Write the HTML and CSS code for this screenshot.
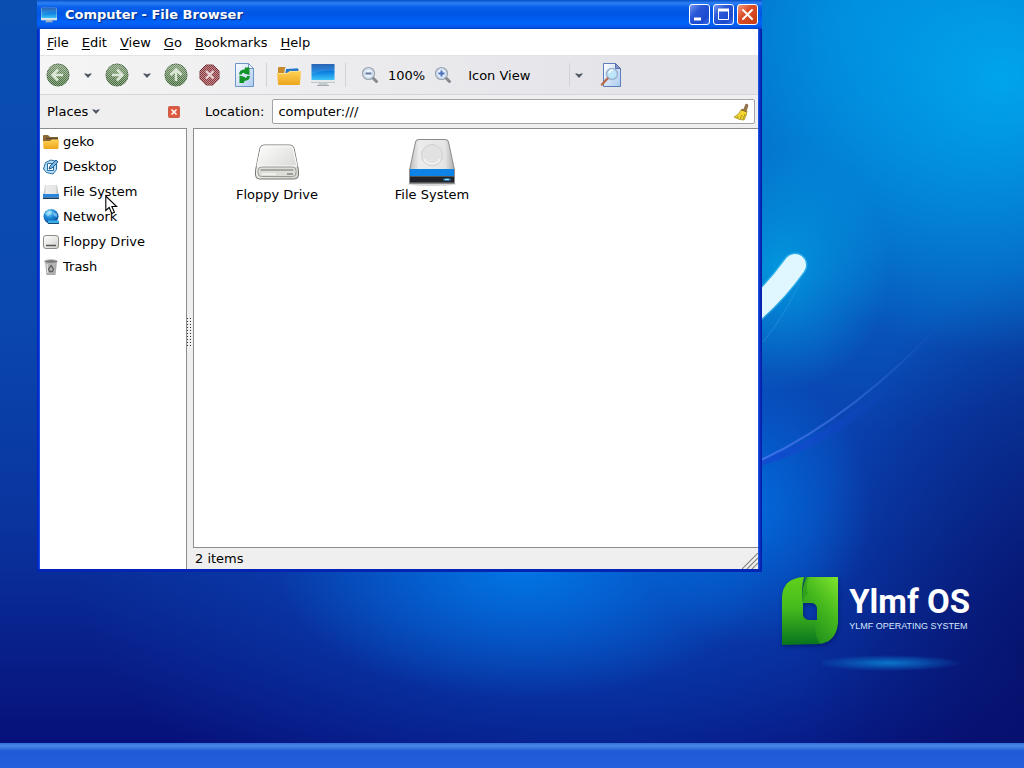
FILE: index.html
```html
<!DOCTYPE html>
<html lang="en">
<head>
<meta charset="utf-8">
<title>Computer - File Browser</title>
<link rel="stylesheet" href="styles.css">
</head>
<body>
<svg class="defs" width="0" height="0" aria-hidden="true">
  <defs>
    <linearGradient id="green" x1="0" y1="0" x2="0" y2="1"><stop offset="0" stop-color="#7d9a70"/><stop offset="1" stop-color="#3a6630"/></linearGradient>
    <linearGradient id="screen" x1="0" y1="0" x2="0" y2="1"><stop offset="0" stop-color="#0b4da8"/><stop offset=".45" stop-color="#0879dc"/><stop offset="1" stop-color="#3fc4fa"/></linearGradient>
    <linearGradient id="folder" x1="0" y1="0" x2="0" y2="1"><stop offset="0" stop-color="#ffd257"/><stop offset="1" stop-color="#eda51d"/></linearGradient>
    <linearGradient id="metal" x1="0" y1="0" x2="1" y2="1"><stop offset="0" stop-color="#ffffff"/><stop offset="1" stop-color="#d0d0cc"/></linearGradient>
    <linearGradient id="disk" x1="0" y1="0" x2="1" y2="0"><stop offset="0" stop-color="#bdbdbd"/><stop offset=".2" stop-color="#ececec"/><stop offset=".8" stop-color="#e4e4e4"/><stop offset="1" stop-color="#b0b0b0"/></linearGradient>
    <linearGradient id="page" x1="0" y1="0" x2="1" y2="1"><stop offset="0" stop-color="#ffffff"/><stop offset="1" stop-color="#a9caf0"/></linearGradient>
    <radialGradient id="globe" cx=".4" cy=".25" r=".8"><stop offset="0" stop-color="#8edcf8"/><stop offset=".45" stop-color="#1c88d6"/><stop offset="1" stop-color="#0a4390"/></radialGradient>
    <pattern id="stipple" width="2" height="2" patternUnits="userSpaceOnUse"><path d="M0 0h1v1H0zM1 1h1v1H1z" fill="#eeeeee" fill-opacity=".5"/></pattern>
    <symbol id="i-computer" viewBox="0 0 24 24">
      <rect x="0" y="1" width="24" height="19" rx="1" fill="#e9eef2"/><rect x=".5" y="1" width="23" height="16" fill="url(#screen)"/><path d="M.5 1h23v7Q12 7 .5 11z" fill="#fff" opacity=".13"/><path d="M0 17h24v2.500H0z" fill="#e4e8ea"/><path d="M0 19.500h24" stroke="#aab2b8" stroke-width=".6"/><path d="M8 20h8l1 2H7z" fill="#c5cacd"/><path d="M6 22.500h12" stroke="#a5abb0"/>
    </symbol>
    <symbol id="i-folder" viewBox="0 0 24 24">
      <path d="M1 5q0-1 1-1h6l2 2h11q1 0 1 1v14H1z" fill="#c98a2c"/><path d="M8 5l13-1 1 8H7z" fill="#e8f3fc"/><path d="M9 6l12-.800.5 7L8 13z" fill="#2d78c4"/><path d="M0 10h10l3-2h11l-1 12.500q0 1.500-1 1.500H2q-1 0-1-1.500z" fill="url(#folder)"/><path d="M1 10.500h9l3-2h10" stroke="#ffe694" fill="none" stroke-width=".8"/>
    </symbol>
    <symbol id="i-arrow" viewBox="0 0 8 5"><path d="M0 .5h8L4 5z" fill="#4c5560"/><path d="M2 0l2 1.500L6 0z" fill="#f2f2f2"/></symbol>
    <symbol id="i-lens" viewBox="0 0 20 20">
      <circle cx="8.500" cy="8.500" r="6" fill="#dbe7f6" stroke="#9aa1ad" stroke-width="1.200"/><circle cx="8.500" cy="8.500" r="4.500" fill="#e9f2fd" stroke="#c3d6ed"/><path d="M13.500 13.500l3 3" stroke="#85898f" stroke-width="3" stroke-linecap="round"/>
    </symbol>
    <symbol id="i-disk" viewBox="0 0 48 48">
      <ellipse cx="24" cy="46" rx="24" ry="2" fill="#999" opacity=".4"/><path d="M7 4q1-3 4-3h26q3 0 4 3l6 28v13q0 1-1 1H2q-1 0-1-1V32z" fill="#8b8b8b"/><path d="M8 4q.5-2 3-2h26q2.500 0 3 2l6 28H2z" fill="url(#disk)"/><circle cx="24" cy="17" r="10.500" fill="#e2e2e2" stroke="#d0d0d0"/><path d="M16 21a9 9 0 0 0 16 0" stroke="#f6f6f6" stroke-width="1.500" fill="none"/><path d="M2 31h44v7H2z" fill="#0d83e8"/><path d="M2 38h44v6.500H2z" fill="#20242a"/><path d="M2 38.500h44" stroke="#555"/><ellipse cx="39" cy="41.500" rx="4" ry="1.500" fill="#2c72a5"/><path d="M37 41.500h4" stroke="#bff" stroke-width=".8"/>
    </symbol>
  </defs>
</svg>

<main class="desktop">
  <svg class="swoosh" viewBox="0 0 1024 768" preserveAspectRatio="none" aria-hidden="true">
    <defs>
      <linearGradient id="trail" x1="760" y1="0" x2="940" y2="0" gradientUnits="userSpaceOnUse"><stop offset="0" stop-color="#3f72ec"/><stop offset=".5" stop-color="#2860d0"/><stop offset="1" stop-color="#2860d0" stop-opacity="0"/></linearGradient>
      <linearGradient id="under" x1="750" y1="0" x2="900" y2="0" gradientUnits="userSpaceOnUse"><stop offset="0" stop-color="#1546d0"/><stop offset="1" stop-color="#1546d0" stop-opacity="0"/></linearGradient>
    </defs>
    <path d="M745 466Q850 430 920 350Q860 442 745 470z" fill="url(#under)" opacity=".8"/>
    <path d="M750 465Q850 422 948 316" stroke="url(#trail)" stroke-width="2" fill="none"/>
    <path d="M763 342Q785 315 800 282" stroke="#3a9be0" fill="none" opacity=".5"/>
    <path d="M750 314Q775 293 795 265" stroke="#69dcff" stroke-width="25" stroke-linecap="round" fill="none" opacity=".4"/>
    <path d="M750 314Q775 293 795 265" stroke="#e0f7ff" stroke-width="22" stroke-linecap="round" fill="none"/>
  </svg>

  <section class="brand">
    <svg class="brand-mark" viewBox="0 0 56 68" aria-hidden="true">
      <defs><linearGradient id="leafA" x1="0" y1="0" x2="0" y2="1"><stop offset="0" stop-color="#62cf1b"/><stop offset=".45" stop-color="#45bc1c"/><stop offset="1" stop-color="#08731e"/></linearGradient><linearGradient id="leafB" x1="1" y1="0" x2=".4" y2="1"><stop offset="0" stop-color="#80e42c"/><stop offset=".5" stop-color="#45b81d"/><stop offset="1" stop-color="#1f8f1c"/></linearGradient></defs>
      <path d="M33 43h2V31q-1-5-6-5h-8Q19 10 25 0H56V46Q54 66 36 67H30z" fill="url(#leafB)"/>
      <path d="M22 0Q19 10 21 26V38Q22 43 28 43H34Q31 56 38 67L0 68V20Q1 1 22 0z" fill="url(#leafA)"/>
      <path d="M22 0q-3 10-1 26 1-8 5-9-3-9 1-17z" fill="#1f8f18" opacity=".45"/>
    </svg>
    <div class="brand-text"><strong class="brand-name">Ylmf OS</strong><span class="brand-sub">YLMF OPERATING SYSTEM</span></div>
    <div class="brand-glow"></div>
  </section>

  <section class="window" aria-label="Computer - File Browser">
    <header class="titlebar">
      <svg class="icon16" aria-hidden="true"><use href="#i-computer"/></svg>
      <h1 class="title">Computer - File Browser</h1>
      <button class="winbtn" aria-label="Minimize"><svg viewBox="0 0 19 19"><path d="M4 14h7" stroke="#fff" stroke-width="3"/></svg></button>
      <button class="winbtn" aria-label="Maximize"><svg viewBox="0 0 19 19"><path d="M4.500 5v9.500h10V5" stroke="#fff" fill="none"/><path d="M4 5h11" stroke="#fff" stroke-width="3"/></svg></button>
      <button class="winbtn winbtn-close" aria-label="Close"><svg viewBox="0 0 19 19"><path d="M5 5l9 9M14 5l-9 9" stroke="#fff" stroke-width="2" stroke-linecap="round"/></svg></button>
    </header>

    <nav class="menubar" aria-label="Menu">
      <button class="menu"><u>F</u>ile</button><button class="menu"><u>E</u>dit</button><button class="menu"><u>V</u>iew</button><button class="menu"><u>G</u>o</button><button class="menu"><u>B</u>ookmarks</button><button class="menu"><u>H</u>elp</button>
    </nav>

    <div class="toolbar">
      <div class="history">
        <button class="tool" aria-label="Back" disabled><svg viewBox="0 0 24 24"><circle cx="12" cy="12" r="11" fill="url(#green)" stroke="#3f6238"/><path d="M17 12H7M12 6.500L6.500 12l5.500 5.500" stroke="#d5e5cf" stroke-width="2.500" fill="none"/><circle cx="12" cy="12" r="11.500" fill="url(#stipple)"/></svg></button>
        <button class="drop" aria-label="Back history" disabled><svg class="caret"><use href="#i-arrow"/></svg></button>
        <button class="tool" aria-label="Forward" disabled><svg viewBox="0 0 24 24"><circle cx="12" cy="12" r="11" fill="url(#green)" stroke="#3f6238"/><path d="M7 12h10M12 6.500l5.500 5.500-5.500 5.500" stroke="#d5e5cf" stroke-width="2.500" fill="none"/><circle cx="12" cy="12" r="11.500" fill="url(#stipple)"/></svg></button>
        <button class="drop" aria-label="Forward history" disabled><svg class="caret"><use href="#i-arrow"/></svg></button>
        <button class="tool" aria-label="Up" disabled><svg viewBox="0 0 24 24"><circle cx="12" cy="12" r="11" fill="url(#green)" stroke="#3f6238"/><path d="M12 18V7M6.500 12L12 6.500l5.500 5.500" stroke="#d5e5cf" stroke-width="2.500" fill="none"/><circle cx="12" cy="12" r="11.500" fill="url(#stipple)"/></svg></button>
      </div>
      <button class="tool" aria-label="Stop" disabled><svg viewBox="0 0 24 24"><path d="M8 2h7l6 6v8l-6 6H8l-6-6V8z" fill="#8f363c" stroke="#6f2229" stroke-linejoin="round"/><path d="M8 8l7.500 7.500M15.500 8L8 15.500" stroke="#e8d0d0" stroke-width="2"/><path d="M8 1.500h7.500l6 6v9l-6 6H8l-6.500-6v-9z" fill="url(#stipple)"/></svg></button>
      <button class="tool" aria-label="Reload"><svg viewBox="0 0 24 24"><path d="M3.500.5h13l5 5v18h-18z" fill="url(#page)" stroke="#6e95c5"/><path d="M16.500.5v5h5z" fill="#fff" stroke="#6e95c5"/><path d="M8.500 11.500Q8.500 8 13 8H14M16.500 13Q16.500 16.500 12 16.500H11" stroke="#119327" stroke-width="2.800" fill="none"/><path d="M13 4.500h4.500V12L12 10.500zM12 20H7.500v-7.500L13 14z" fill="#119327"/></svg></button>
      <span class="sep"></span>
      <button class="tool" aria-label="Home folder"><svg><use href="#i-folder"/></svg></button>
      <button class="tool" aria-label="Computer"><svg><use href="#i-computer"/></svg></button>
      <span class="sep"></span>
      <div class="zoom">
        <button class="zoombtn" aria-label="Zoom out"><svg viewBox="0 0 20 20"><use href="#i-lens"/><path d="M5.500 8.500h6" stroke="#667b9c" stroke-width="2"/></svg></button>
        <span>100%</span>
        <button class="zoombtn" aria-label="Zoom in"><svg viewBox="0 0 20 20"><use href="#i-lens"/><path d="M5.500 8.500h6M8.500 5.500v6" stroke="#4c70b8" stroke-width="2"/></svg></button>
      </div>
      <label class="viewpick"><select aria-label="View mode"><option>Icon View</option><option>List View</option></select><svg class="caret viewcaret"><use href="#i-arrow"/></svg></label>
      <button class="tool" aria-label="Search"><svg viewBox="0 0 24 24"><path d="M3.500.5h12l5 5v18h-17z" fill="url(#page)" stroke="#5b7fba"/><path d="M15.500.5v5h5z" fill="#8295cf" stroke="#5b6fae"/><circle cx="12" cy="11" r="5.500" fill="#bfe5fa" stroke="#9bb3d2" stroke-width="1.500"/><path d="M9 10q1-3 4-3" stroke="#fff" stroke-width="1.500" fill="none"/><path d="M7.500 15.500L2 21.500" stroke="#b86c50" stroke-width="2.500" stroke-linecap="round"/></svg></button>
    </div>

    <div class="body">
      <aside class="side">
        <div class="side-head"><button class="places">Places <svg class="caret"><use href="#i-arrow"/></svg></button>
          <button class="side-close" aria-label="Close side pane"><svg viewBox="0 0 12 12"><rect x=".5" y=".5" width="11" height="11" rx="1" fill="#de583e" stroke="#c95f4c"/><path d="M3.500 3.500l5 5M8.500 3.500l-5 5" stroke="#fff" stroke-width="1.500"/></svg></button></div>
        <ul class="places-list">
          <li><svg class="icon16" viewBox="0 0 16 16"><path d="M0 2q0-1 1-1h4l2 2h8v5H0z" fill="#8d6a35"/><path d="M3 4.500h12" stroke="#5c4a30" stroke-width="1.500"/><path d="M0 7h7l2-1.500h7L15.500 14q0 1-1 1h-13q-1 0-1-1z" fill="url(#folder)"/></svg>geko</li>
          <li><svg class="icon16" viewBox="0 0 16 16"><path d="M2.500 3.500L8 1l5.500 1.500v8L10 15l-6.500-1.500L.5 10z" fill="#b9dcf3" stroke="#2470a8"/><path d="M4.500 4.500h6v7h-6z" fill="#fff" stroke="#2470a8"/><path d="M6 10l1-3 6-6 2 2-6 6z" fill="#7fb6de" stroke="#1c5e96"/></svg>Desktop</li>
          <li><svg class="icon16" viewBox="0 0 16 16"><path d="M2 1h12l1.500 9H.5z" fill="url(#disk)"/><path d="M0 10h16v3.500H0z" fill="#2886dd"/><path d="M0 13.500h16v1.500H0z" fill="#1b3a5c"/></svg>File System</li>
          <li><svg class="icon16" viewBox="0 0 16 16"><circle cx="8" cy="7.500" r="7.500" fill="url(#globe)"/><path d="M2 5q3-4 6-3l1 2-4 3zM10 3l4 2v3l-3-1z" fill="#baf0ff" opacity=".55"/><path d="M5 11.500h11v3H5z" fill="#37aeea"/><path d="M5 14.500h11" stroke="#1d4975"/></svg>Network</li>
          <li><svg class="icon16" viewBox="0 0 16 16"><rect x=".5" y="1.500" width="15" height="13" rx="2.500" fill="url(#metal)" stroke="#8c8c88"/><path d="M3 11.500h10" stroke="#565652" stroke-width="1.500"/></svg>Floppy Drive</li>
          <li><svg class="icon16" viewBox="0 0 16 16"><path d="M2.500 3h11l-1.500 13H4z" fill="#b4b4b4" stroke="#959595" stroke-width=".7"/><ellipse cx="8" cy="2.500" rx="6.500" ry="1.800" fill="#777" stroke="#bababa"/><path d="M8 6.500l2.500 3.500-1 2.500h-3L5.500 10z" fill="none" stroke="#606060" stroke-width="1.300"/><path d="M4 5l.8 9" stroke="#e9e9e9"/></svg>Trash</li>
        </ul>
      </aside>
      <div class="splitter"><svg class="grip" viewBox="0 0 6 30"><defs><pattern id="dots" width="3" height="3" patternUnits="userSpaceOnUse"><path d="M0 1h1v1H0z" fill="#333"/><path d="M1 2h1v1H1z" fill="#fff"/></pattern></defs><path d="M0 0h6v30H0z" fill="url(#dots)"/></svg></div>
      <section class="content">
        <div class="location"><label for="loc">Location:</label>
          <div class="field"><input id="loc" type="text" value="computer:///"><button class="clear" aria-label="Clear location"><svg viewBox="0 0 16 18"><path d="M11 6l2-5 2 1-1.500 5z" fill="#a37946" stroke="#6b4c2c" stroke-width=".7"/><path d="M8 7q3-2 6 1-.5 5-3 9-5 0-10-3 5-2 7-7z" fill="#f4d831" stroke="#a18a1e" stroke-width=".8"/><path d="M5 13l-1 2M9 12l-2 4M12 11l-2 5" stroke="#ad941c"/><path d="M8.500 6.500l5 2" stroke="#875f3b" stroke-width="1.500"/></svg></button></div>
        </div>
        <div class="files">
          <figure class="file"><svg viewBox="0 0 48 48"><path d="M7 10q.8-3 4-3h26q3.200 0 4 3l4 20q.500 2 .500 4v3q0 4-4 4H6.500q-4 0-4-4v-3q0-2 .500-4z" fill="url(#metal)" stroke="#777773"/><path d="M8 10q.5-2 3-2h26q2.500 0 3 2l4 18H4z" fill="none" stroke="#fff"/><rect x="5" y="29" width="38" height="9.500" rx="3.500" fill="#deded9" stroke="#999994"/><path d="M7.500 32h33" stroke="#95958f" stroke-width="1.500"/><path d="M9 36h14" stroke="#fff"/><path d="M34 36h6" stroke="#999" stroke-width="2"/></svg><figcaption>Floppy Drive</figcaption></figure>
          <figure class="file"><svg><use href="#i-disk"/></svg><figcaption>File System</figcaption></figure>
        </div>
        <footer class="status"><span>2 items</span><svg class="resize" viewBox="0 0 16 16" aria-hidden="true"><path d="M0 16L16 0M5 16L16 5M10 16l6-6" stroke="#87877f" stroke-width="1.200"/></svg></footer>
      </section>
    </div>
  </section>

  <svg class="cursor" viewBox="0 0 13 20" aria-hidden="true"><path d="M.8 1v14.500l3.400-3 2.600 6 2.600-1.200L6.900 11.500h4.700z" fill="#fff" stroke="#000" stroke-width="1.100"/></svg>
  <div class="taskbar"></div>
</main>
</body>
</html>
```
FILE: styles.css
```css
* { box-sizing: border-box; }
body { margin: 0; font: 13px/17px "DejaVu Sans", sans-serif; color: #000; }
.defs { position: absolute; }
button { margin: 0; padding: 0; border: 0; background: none; font: inherit; color: inherit; }
svg { display: block; }

.desktop {
  position: relative;
  display: flex;
  flex-direction: column;
  justify-content: flex-end;
  min-height: 100vh;
  overflow: hidden;
  background:
    radial-gradient(ellipse 11% 16% at 76% 35%, rgba(0, 170, 232, .75), transparent),
    radial-gradient(ellipse 30% 36% at 98% 10%, rgba(0, 168, 238, .95), transparent),
    radial-gradient(ellipse 24% 17% at 51% 74%, rgba(0, 126, 236, .85), transparent),
    radial-gradient(ellipse 12% 18% at 73% 66%, rgba(0, 116, 228, .8), transparent),
    radial-gradient(ellipse 26% 50% at 104% 84%, rgba(6, 16, 104, .9), transparent),
    radial-gradient(ellipse 50% 46% at 56% 68%, rgba(8, 78, 196, .85), transparent),
    radial-gradient(ellipse 40% 56% at 84% 0, #0080d6, transparent),
    linear-gradient(180deg, #0a4eb2 0, #0a48b0 40%, #0a349e 68%, #07107a 97%);
}
.swoosh { position: absolute; inset: 0; width: 100%; height: 100%; }
.taskbar {
  position: relative;
  height: 25px;
  background: linear-gradient(180deg, #3270d8 0, #4a88e8 3px, #1f5bd6 8px, #265fdc 100%);
}

.brand {
  position: absolute;
  right: 54px;
  bottom: 95px;
  display: grid;
  grid-template-columns: 56px auto;
  column-gap: 11px;
}
.brand-mark { width: 56px; height: 68px; filter: drop-shadow(1px 2px 2px rgba(0, 10, 80, .5)); }
.brand-text { display: flex; flex-direction: column; padding-top: 8px; color: #fff; }
.brand-name { font: 700 33px/34px Roboto, sans-serif; white-space: nowrap; }
.brand-sub { font: 9px/14px "Liberation Sans", sans-serif; color: #d8e8ff; white-space: nowrap; }
.brand-glow {
  grid-column: 1 / -1;
  height: 20px;
  margin-top: 8px;
  margin-left: 40px;
  background: radial-gradient(ellipse 50% 40% at 45% 50%, #0a76cc, transparent);
}

.window {
  position: absolute;
  left: 37px;
  top: 0;
  display: flex;
  flex-direction: column;
  width: calc(100vw - 299px);
  min-height: calc(100vh - 196px);
  padding: 0 4px 3px 3px;
  background: linear-gradient(90deg, #0420b8 0, #0636d8 2px, #2c6ce8 3px, #2c6ce8 calc(100% - 4px), #0a3ad0 calc(100% - 3px), #0318a0 100%);
  box-shadow: inset 0 -3px #0424b4;
}
.titlebar {
  display: flex;
  align-items: center;
  gap: 3px;
  height: 29px;
  margin: 0 -4px 0 -3px;
  padding: 0 4px;
  background: linear-gradient(180deg, #0750c8 0, #2c80f4 3px, #0860ec 7px, #0055e4 14px, #0064fa 23px, #0055e8 27px, #0342c0 100%);
}
.icon16 { width: 16px; height: 16px; flex: none; }
.title {
  flex: 1;
  margin: 0;
  padding-left: 5px;
  font-size: 13px;
  font-weight: 700;
  color: #fff;
  text-shadow: 1px 1px 1px #052a80;
}
.winbtn {
  width: 21px;
  height: 21px;
  border: 1px solid #fff;
  border-radius: 3px;
  background: linear-gradient(135deg, #7898ee 0, #2a58d8 35%, #1c49cd 75%, #3c70f0 100%);
}
.winbtn-close { background: linear-gradient(135deg, #f09a7c 0, #dc4e2a 40%, #c63c12 100%); }

.menubar { display: flex; gap: 1px; height: 26px; padding-left: 1px; background: #fff; }
.menu { padding: 0 6px; }
.menu u { text-underline-offset: 2px; }

.toolbar {
  display: flex;
  align-items: center;
  gap: 10px;
  height: 40px;
  padding-left: 6px;
  border-top: 1px solid #e4e4e6;
  border-bottom: 1px solid #d6d6da;
  background: linear-gradient(90deg, #f5f5f5, #e4e4e9 80%);
}
.history, .zoom { display: flex; align-items: center; }
.tool, .tool svg { width: 24px; height: 24px; }
.drop { display: flex; justify-content: center; width: 35px; }
.caret { width: 8px; height: 5px; }
.sep { width: 1px; height: 24px; background: #d3d3d6; }
.zoom { gap: 8px; padding-left: 4px; }
.zoombtn, .zoombtn svg { width: 20px; height: 20px; }
.viewpick { position: relative; }
.viewpick select {
  width: 127px;
  height: 26px;
  padding: 0 5px;
  border: 0;
  appearance: none;
  font: inherit;
  color: inherit;
  background: linear-gradient(#d3d3d6, #d3d3d6) calc(100% - 20px) 50% / 1px 24px no-repeat;
}
.viewcaret { position: absolute; right: 7px; top: 11px; }

.body { flex: 1; display: flex; background: #efefef; }
.side { display: flex; flex-direction: column; width: 147px; flex: none; }
.side-head {
  display: flex;
  align-items: center;
  justify-content: space-between;
  height: 33px;
  padding: 0 7px;
}
.places { display: flex; align-items: center; gap: 4px; }
.side-close svg { width: 12px; height: 12px; }
.places-list {
  flex: 1;
  margin: 0;
  padding: 0 3px;
  list-style: none;
  background: #fff;
  border: solid #8c8c8c;
  border-width: 1px 1px 0 0;
}
.places-list li { display: flex; align-items: center; gap: 4px; height: 25px; }
.splitter { display: flex; align-items: center; width: 6px; }
.grip { width: 6px; height: 30px; }
.content { flex: 1; display: flex; flex-direction: column; min-width: 0; }
.location { display: flex; align-items: center; gap: 8px; height: 33px; padding: 0 3px 0 12px; }
.field {
  flex: 1;
  display: flex;
  align-items: center;
  height: 25px;
  padding: 0 5px;
  background: #fff;
  border: 1px solid #a3a3a3;
  border-radius: 2px;
}
.field input { flex: 1; min-width: 0; padding: 0; border: 0; outline: 0; font: inherit; background: none; }
.clear svg { width: 16px; height: 18px; }
.files {
  flex: 1;
  display: flex;
  align-items: flex-start;
  gap: 35px;
  padding: 9px 23px;
  background: #fff;
  border: 1px solid #8c8c8c;
  border-right: 0;
}
.file { display: flex; flex-direction: column; align-items: center; width: 120px; margin: 0; }
.file svg { width: 48px; height: 48px; }
.status { display: flex; justify-content: space-between; align-items: center; height: 21px; padding-left: 2px; }
.resize { width: 16px; height: 16px; align-self: flex-end; }

.cursor { position: absolute; left: 105px; top: 195px; width: 13px; height: 20px; }
```
